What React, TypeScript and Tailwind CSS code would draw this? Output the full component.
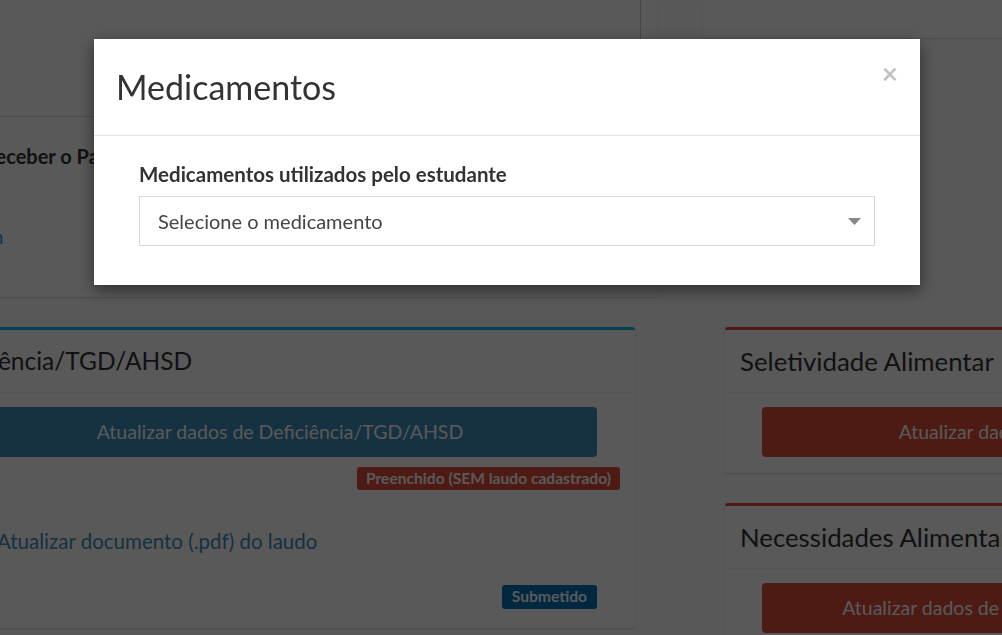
import React from "react";

const font = { fontFamily: "Lato, 'Noto Sans', sans-serif" };

function Page() {
  return (
    <div className="min-h-[635px] w-full bg-[#fbfbfb] overflow-hidden" style={font}>
      {/* top row */}
      <div className="flex ml-[-70px] w-[1160px]">
        <div className="w-[727px] flex flex-col">
          <div className="bg-white rounded-b-[3px] shadow-[0_1px_2px_rgba(0,0,0,0.15)] h-[297px] flex flex-col">
            <div className="flex h-[117px] border-b border-[#d4d4d4]">
              <div className="w-[711px] h-[116px] border-r border-[#c4c4c4]" />
            </div>
            <div className="-ml-[7px] pt-[24px] text-[20px] font-bold text-[#333]">Deseja receber o Passe Livre?</div>
            <div className="pl-[43px] pt-[52px] text-[19px] text-[#3c8dbc]">Sim</div>
          </div>
        </div>
        <div className="ml-[46px] flex-1 h-[38px] bg-white rounded-b-[4px] shadow-[0_1px_2px_rgba(0,0,0,0.15)]" />
      </div>

      {/* lower row */}
      <div className="flex ml-[-96px] mt-[30px] gap-[90px] w-[1600px]">
        <div className="w-[731px] bg-white rounded-[3px] border-t-[3px] border-[#00c0ef] shadow-[0_1px_2px_rgba(0,0,0,0.15)] h-[301px]">
          <div className="h-[63px] flex items-center pl-[31px] pr-[15px] border-b border-[#f0f0f0] text-[24.5px] text-[#333]">
            Deficiência/TGD/AHSD
          </div>
          <div className="pl-[59px] pr-[38px] pt-[14px]">
            <div className="h-[50px] rounded-[4px] bg-[#3c8dbc] text-white text-[19.5px] flex items-center justify-center">
              Atualizar dados de Deficiência/TGD/AHSD
            </div>
            <div className="flex justify-end mt-[10px] mr-[-23px]">
              <span className="h-[23px] px-[9px] rounded-[3px] bg-[#dd4b39] text-white text-[15.6px] font-bold flex items-center">
                Preenchido (SEM laudo cadastrado)
              </span>
            </div>
            <div className="mt-[36px] ml-[34px] text-[20.5px] text-[#3c8dbc]">Atualizar documento (.pdf) do laudo</div>
            <div className="flex justify-end mt-[28px]">
              <span className="h-[24px] px-[10px] rounded-[3px] bg-[#0073b7] text-white text-[15.6px] font-bold flex items-center">
                Submetido
              </span>
            </div>
          </div>
        </div>
        <div className="w-[701px] flex flex-col gap-[30px]">
          <div className="bg-white rounded-[3px] border-t-[3px] border-[#dd4b39] shadow-[0_1px_2px_rgba(0,0,0,0.15)] h-[146px]">
            <div className="h-[63px] flex items-center px-[15px] border-b border-[#f0f0f0] text-[25.8px] text-[#333]">
              Seletividade Alimentar
            </div>
            <div className="px-[37px] pt-[14px]">
              <div className="h-[50px] rounded-[4px] bg-[#dd4b39] text-white text-[19.5px] flex items-center justify-center">
                Atualizar dados de Seletividade Alimentar
              </div>
            </div>
          </div>
          <div className="bg-white rounded-[3px] border-t-[3px] border-[#dd4b39] shadow-[0_1px_2px_rgba(0,0,0,0.15)] h-[146px]">
            <div className="h-[63px] flex items-center px-[15px] border-b border-[#f0f0f0] text-[25.8px] text-[#333]">
              Necessidades Alimentares Especiais
            </div>
            <div className="px-[37px] pt-[14px]">
              <div className="h-[50px] rounded-[4px] bg-[#dd4b39] text-white text-[19.5px] flex items-center justify-center">
                Atualizar dados de Necessidades Alimentares Especiais
              </div>
            </div>
          </div>
        </div>
      </div>
    </div>
  );
}

export default function App() {
  return (
    <div className="relative w-full h-[635px] overflow-hidden">
      <Page />
      <div className="fixed inset-0 bg-black/65" />
      <div className="fixed inset-0 flex justify-start pl-[94px] pt-[39px]" style={font}>
        <div className="w-[826px] h-[246px] bg-white shadow-[0_5px_15px_rgba(0,0,0,0.5)] flex flex-col">
          <div className="relative h-[97px] flex items-center px-[22px] border-b border-[#e5e5e5]">
            <h4 className="text-[34px] text-[#333] leading-none">Medicamentos</h4>
            <button className="absolute right-[22px] top-[20px] text-[#c2c2c2] text-[28px] font-bold leading-none">×</button>
          </div>
          <div className="px-[45px] pt-[26px]">
            <label className="block text-[20.5px] font-bold text-[#333] leading-[24px]">
              Medicamentos utilizados pelo estudante
            </label>
            <div className="mt-[10px] h-[50px] border border-[#d2d6de] flex items-center justify-between pl-[18px] pr-[13px]">
              <span className="text-[20px] text-[#444]">Selecione o medicamento</span>
              <svg width="13" height="7" viewBox="0 0 13 7">
                <path d="M0 0 L13 0 L6.5 7 Z" fill="#888" />
              </svg>
            </div>
          </div>
        </div>
      </div>
    </div>
  );
}
